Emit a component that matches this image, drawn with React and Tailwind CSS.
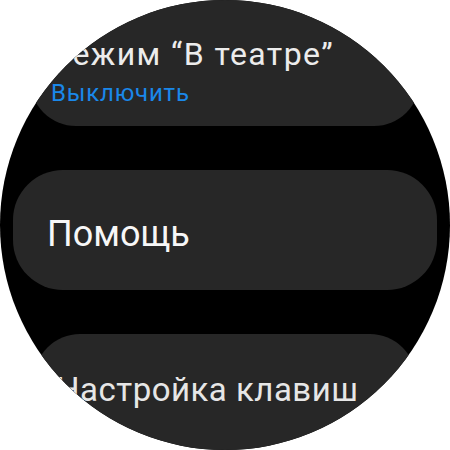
export default function App() {
  return (
    <div className="w-[450px] h-[450px] bg-white" style={{ fontFamily: 'Roboto, "Noto Sans", sans-serif' }}>
      <div className="w-[450px] h-[450px] rounded-full overflow-hidden bg-black flex flex-col items-center">
        {/* Режим "В театре" */}
        <div className="shrink-0 w-[390px] h-[146px] -mt-[20px] rounded-[46px] bg-[#272727] pl-[21px] pt-[56px] flex flex-col gap-[7px]">
          <div className="text-[32px] leading-[36px] tracking-[1.4px] text-[#ececec] whitespace-nowrap">Режим “В театре”</div>
          <div className="text-[24px] leading-[28px] tracking-[0.8px] text-[#1a88ea]">Выключить</div>
        </div>

        {/* Помощь */}
        <div className="shrink-0 mt-[44px] w-[424px] h-[120px] rounded-[50px] bg-[#272727] pl-[34px] pt-[43px]">
          <div className="text-[36px] leading-[42px] text-[#f7f7f7]">Помощь</div>
        </div>

        {/* Настройка клавиш */}
        <div className="shrink-0 mt-[44px] w-[382px] h-[140px] rounded-[46px] bg-[#272727] pl-[22px] pt-[36px]">
          <div className="text-[33px] leading-[40px] tracking-[0.5px] text-[#e6e6e6] whitespace-nowrap">Настройка клавиш</div>
        </div>
      </div>
    </div>
  )
}
